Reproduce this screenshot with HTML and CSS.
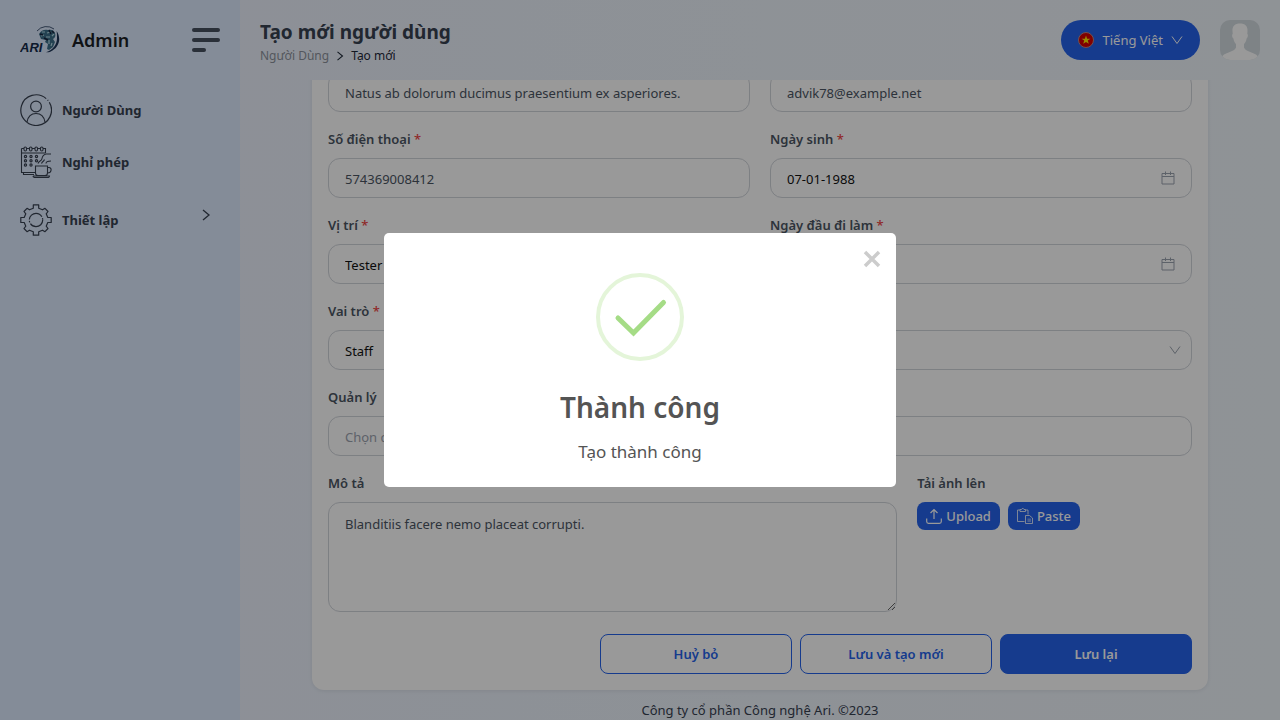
FILE: index.html
```html
<!DOCTYPE html>
<html lang="vi">
<head>
<meta charset="utf-8">
<meta name="viewport" content="width=device-width, initial-scale=1">
<title>Tạo mới người dùng</title>
<link rel="stylesheet" href="styles.css">
</head>
<body>
<svg class="sprite" aria-hidden="true">
  <symbol id="calendar" viewBox="0 0 14 14"><path d="M1 2.500h12v10.500H1zM1 5.500h12M4.500 .5v3.500M9.500 .5v3.500" fill="none" stroke="currentColor"/></symbol>
  <symbol id="down" viewBox="0 0 12 12"><path d="M1 2.500 6 9.500 11 2.500" fill="none" stroke="currentColor"/></symbol>
  <symbol id="right" viewBox="0 0 12 12"><path d="M3 1 9 6 3 11" fill="none" stroke="currentColor" stroke-width="1.300"/></symbol>
</svg>
<div class="app">
  <aside class="sidebar">
    <div class="brand">
      <svg class="logo" viewBox="0 0 40 28" aria-hidden="true">
        <path d="M17 5A12.500 12.500 0 0 1 34 3" fill="none" stroke="#1d3557" stroke-width=".8"/>
        <path d="M36.500 5c4.500 6 3.500 15-4 19.500-2 1.500-4 2-6.500 1.800 7-2.300 11-8 11-14C37 9 37 7 36.500 5z" fill="#1d3557"/>
        <path d="M19 8c2-4 6-5 9-4 3-1 6 0 7 3 1 3 0 5-2 6l2 3-2 5-4 3-2-1 1-5-3-2 1-2-5-1z" fill="#3d6f89"/>
        <path d="M22 6h3M27 7l4-1M21 10l3-1M26 11h4M32 10l2-2M29 14v4M32 17l-1 3" stroke="#b5dce6" stroke-width="1.200"/>
        <path d="M29 4l2 4M24 12l4 2M32 5l2 2M20 8l3 1" stroke="#17263f" stroke-width="1.500"/>
        <text x="0" y="26" class="logo-text">ARI</text>
      </svg>
      <span class="brand-name">Admin</span>
      <button class="menu-toggle" aria-label="Menu"><span></span><span></span><span></span></button>
    </div>
    <nav class="nav">
      <a class="nav-item" href="#">
        <svg class="nav-icon" viewBox="0 0 32 32" aria-hidden="true"><g fill="none" stroke="currentColor" stroke-width="1.200"><path d="M29.300 8.300A15.300 15.300 0 1 1 26.200 4.600M27.600 6l.6.700"/><circle cx="16" cy="12.500" r="5.400"/><path d="M7 28c1-5.500 4.500-8.500 9-8.500s8 3 9 8.500"/></g></svg>
        <span>Người Dùng</span>
      </a>
      <a class="nav-item" href="#">
        <svg class="nav-icon" viewBox="0 0 32 32" aria-hidden="true"><g fill="none" stroke="currentColor" stroke-width="1.100"><path d="M1.500 2.500v24H15M3.500 26.500v2H14M1.500 2.500H4M6.500 2.500h3M12 2.500h3M17.500 2.500h3M23 2.500h2.500V7M1.500 7h24"/><rect x="4" y="1" width="2.500" height="4" rx="1.200"/><rect x="9.500" y="1" width="2.500" height="4" rx="1.200"/><rect x="15" y="1" width="2.500" height="4" rx="1.200"/><rect x="20.500" y="1" width="2.500" height="4" rx="1.200"/><path d="M15.500 20h12v7c0 1.500-1 2.500-2.500 2.500h-7c-1.500 0-2.500-1-2.500-2.500zM27.500 21.500H29c3 0 3 5.500-1.500 5.500M13 30h16.500c0 1-.6 1.500-1.500 1.500H15c-1 0-2-.5-2-1.500M18 17.500c1-3 3.500-2 4-5s2-4 4-4.500h5M21.500 17.500c1-2.500 2-1.500 3-4M26 17.500c0-1.500 2-2.500 5-2.500"/></g><g fill="none" stroke="currentColor" stroke-width="1.200"><circle cx="5.500" cy="10.500" r="1.100"/><circle cx="11" cy="10.500" r="1.100"/><circle cx="16.500" cy="10.500" r="1.100"/><circle cx="5.500" cy="14.700" r="1.100"/><circle cx="11" cy="14.700" r="1.100"/><circle cx="16.500" cy="14.700" r="1.100"/><circle cx="5.500" cy="19" r="1.100"/><circle cx="11" cy="19" r="1.100"/></g></svg>
        <span>Nghỉ phép</span>
      </a>
      <a class="nav-item nav-group" href="#">
        <svg class="nav-icon" viewBox="0 0 32 32" aria-hidden="true"><g fill="none" stroke="currentColor" stroke-width="1.200" stroke-linejoin="round"><path d="M13.300.8h5.400v3.400l3.800 1.600L25 4.300l3 3.200-1.800 2.300 1.600 3.700h3.400v5h-3.400l-1.600 3.700 1.800 2.300-3 3.200-2.500-1.500-3.800 1.600v3.400h-5.400v-3.400l-3.800-1.600L7 27.700l-3-3.200 1.800-2.300-1.600-3.700H.8v-5h3.400l1.600-3.700L4 7.500l3-3.200 2.500 1.500 3.800-1.600z"/><circle cx="16" cy="16" r="6.700" stroke-dasharray="17 1.500 1.500 1.500"/></g></svg>
        <span>Thiết lập</span>
        <svg class="chevron nav-chevron" aria-hidden="true"><use href="#right"/></svg>
      </a>
    </nav>
  </aside>

  <div class="page">
    <header class="topbar">
      <div class="heading">
        <h1>Tạo mới người dùng</h1>
        <nav class="crumbs"><a href="#">Người Dùng</a><svg class="crumb-arrow" aria-hidden="true"><use href="#right"/></svg><span>Tạo mới</span></nav>
      </div>
      <button class="language">
        <svg class="flag" viewBox="0 0 16 16" aria-hidden="true"><circle cx="8" cy="8" r="7.500" fill="#d80000" stroke="#b88"/><path d="M8 3.500 9.100 6.700h3.300L9.800 8.600l1 3.200L8 9.900l-2.800 1.900 1-3.200-2.600-1.900h3.300z" fill="#ffe600"/></svg>
        <span>Tiếng Việt</span>
        <svg class="chevron" aria-hidden="true"><use href="#down"/></svg>
      </button>
      <svg class="avatar" viewBox="0 0 40 40" role="img" aria-label="Avatar"><path fill="#d2dadf" d="M0 0h40v40H0z"/><path fill="#fff" d="M20 3.500c5 0 8 2.500 7.500 8l-.2 2.500c1 .2.700 3.500-.7 4.500-.4 3-1.600 4.500-2.600 5.500v3.500c1.500 4 8 4.500 12 7 2 1.500 3 3 3.500 5.500h-39c.5-2.500 1.500-4 3.500-5.500 4-2.500 10.500-3 12-7V24c-1-1-2.200-2.500-2.600-5.500-1.400-1-1.700-4.300-.7-4.500l-.2-2.500c-.5-5.500 2.500-8 7.500-8z"/></svg>
    </header>

    <main class="content">
      <form class="card">
        <div class="fields">
          <div class="field half"><input class="control" aria-label="Họ tên" value="Natus ab dolorum ducimus praesentium ex asperiores."></div>
          <div class="field half"><input class="control" aria-label="Email" type="email" value="advik78@example.net"></div>

          <div class="field half"><label for="phone">Số điện thoại <b>*</b></label><input class="control" id="phone" value="574369008412"></div>
          <div class="field half"><label for="birth">Ngày sinh <b>*</b></label>
            <div class="with-icon"><input class="control dark" id="birth" value="07-01-1988"><svg class="field-icon" aria-hidden="true"><use href="#calendar"/></svg></div></div>

          <div class="field half"><label for="position">Vị trí <b>*</b></label><select class="control dark" id="position"><option>Tester</option></select></div>
          <div class="field half"><label for="start">Ngày đầu đi làm <b>*</b></label>
            <div class="with-icon"><input class="control dark" id="start"><svg class="field-icon" aria-hidden="true"><use href="#calendar"/></svg></div></div>

          <div class="field full"><label for="role">Vai trò <b>*</b></label>
            <div class="with-icon"><select class="control dark" id="role"><option>Staff</option></select><svg class="field-icon select-icon" aria-hidden="true"><use href="#down"/></svg></div></div>

          <div class="field full"><label for="manager">Quản lý</label><input class="control" id="manager" placeholder="Chọn quản lý"></div>

          <div class="field wide"><label for="note">Mô tả</label><textarea class="control" id="note">Blanditiis facere nemo placeat corrupti.</textarea></div>
          <div class="field narrow"><span class="label">Tải ảnh lên</span>
            <div class="uploads">
              <button type="button" class="mini"><svg viewBox="0 0 16 16" aria-hidden="true"><path d="M8 11V1.500M4.500 5 8 1.500 11.500 5M.7 10.500v3c0 1 .7 1.800 1.800 1.800h11c1 0 1.800-.8 1.800-1.800v-3" fill="none" stroke="currentColor" stroke-width="1.200"/></svg>Upload</button>
              <button type="button" class="mini"><svg viewBox="0 0 16 16" aria-hidden="true"><path d="M7.500 13.500H.5V2h2.500M8.500 2h2.500v4.500M3 3.500V1.500h1.500C5 0 6.500 0 7 1.500h1.500v2zM8.500 7.500h4l3 2.500v5.500h-7z" fill="none" stroke="currentColor" stroke-width=".8"/><path d="M10.500 10.500h3.500v3.500h-3.500z" fill="currentColor" opacity=".4"/></svg>Paste</button>
            </div></div>
        </div>
        <div class="actions">
          <button type="button" class="action">Huỷ bỏ</button>
          <button type="button" class="action">Lưu và tạo mới</button>
          <button type="submit" class="action primary">Lưu lại</button>
        </div>
      </form>
      <footer class="footer">Công ty cổ phần Công nghệ Ari. ©2023</footer>
    </main>
  </div>
</div>

<div class="overlay">
  <div class="modal" role="dialog" aria-modal="true" aria-labelledby="modal-title">
    <button class="close" aria-label="Close"><svg viewBox="0 0 18 18" aria-hidden="true"><path d="m2 2 14 14M16 2 2 16" stroke="currentColor" stroke-width="3.500"/></svg></button>
    <svg class="success" viewBox="0 0 88 88" aria-hidden="true"><circle cx="44" cy="44" r="42" fill="none" stroke="#e4f5d9" stroke-width="4"/><path d="M22 45 37.500 60 67.500 29.500" fill="none" stroke="#a5dc86" stroke-width="5" stroke-linecap="round"/></svg>
    <h2 id="modal-title">Thành công</h2>
    <p>Tạo thành công</p>
  </div>
</div>
</body>
</html>
```
FILE: styles.css
```css
* { box-sizing: border-box; }
body {
  margin: 0;
  font: 13px/22px "Noto Sans", "Open Sans", sans-serif;
  color: #1f2937;
}
h1, h2, p { margin: 0; }
a { color: inherit; text-decoration: none; }
button, input, select, textarea { font: inherit; color: inherit; }
button { padding: 0; border: 0; background: none; cursor: pointer; }
.sprite { display: none; }

.app {
  display: grid;
  grid-template-columns: 240px minmax(0, 1fr);
  height: 100vh;
  background: linear-gradient(90deg, #eaf0fc, #eff5fb);
}
.sidebar { background: #dde9fd; }
.brand {
  display: flex;
  align-items: center;
  gap: 12px;
  height: 80px;
  padding: 0 20px;
}
.logo { width: 40px; height: 28px; }
.logo-text { font: italic bold 13px "Liberation Sans", sans-serif; fill: #152b4a; }
.brand-name { font-size: 18px; font-weight: 600; color: #1b1f26; }
.menu-toggle {
  display: grid;
  gap: 6px;
  width: 28px;
  margin-left: auto;
}
.menu-toggle span { height: 4px; border-radius: 2px; background: #46505f; }
.menu-toggle span:last-child { width: 14px; }

.nav { display: grid; gap: 8px; padding: 8px 20px; }
.nav-item {
  display: flex;
  align-items: center;
  gap: 10px;
  height: 44px;
  font-weight: 700;
  color: #374151;
}
.nav-group { height: 56px; }
.nav-icon { width: 32px; height: 32px; }
.chevron { width: 12px; height: 12px; }
.nav-chevron { margin: 0 8px 10px auto; }

.page { display: flex; flex-direction: column; min-height: 0; }
.topbar {
  display: flex;
  align-items: center;
  gap: 20px;
  height: 80px;
  padding: 0 20px;
}
.heading { margin-right: auto; padding-top: 4px; }
h1 { font-size: 19px; line-height: 28px; font-weight: 700; color: #374151; }
.crumbs {
  display: flex;
  align-items: center;
  gap: 6px;
  font-size: 12px;
  line-height: 20px;
}
.crumbs a { color: #8c919b; }
.crumb-arrow { width: 10px; height: 10px; }
.language {
  display: flex;
  align-items: center;
  gap: 8px;
  height: 40px;
  padding: 0 17px;
  border-radius: 20px;
  background: #2563eb;
  color: #fff;
}
.flag { width: 16px; height: 16px; }
.avatar { width: 40px; height: 40px; border-radius: 10px; }

.content {
  flex: 1;
  display: flex;
  flex-direction: column;
  justify-content: flex-end;
  min-height: 0;
  padding: 0 72px;
  overflow: hidden;
}
.card {
  padding: 16px;
  border-radius: 12px;
  background: #fff;
  box-shadow: 0 1px 4px #00000014;
}
.fields {
  display: grid;
  grid-template-columns: repeat(12, minmax(0, 1fr));
  gap: 16px 20px;
}
.half { grid-column: span 6; }
.full { grid-column: span 12; }
.wide { grid-column: span 8; }
.narrow { grid-column: span 4; }
label, .label {
  display: block;
  margin-bottom: 8px;
  font-weight: 600;
  color: #4b5563;
}
label b { font-weight: 500; color: #ef4444; }
.control {
  display: block;
  width: 100%;
  height: 40px;
  padding: 1px 16px 0;
  border: 1px solid #d1d5db;
  border-radius: 12px;
  background: #fff;
  color: #4b5563;
  outline: 0;
  appearance: none;
}
.dark { color: #111; }
.control::placeholder { color: #9ca3af; opacity: 1; }
textarea.control { height: 110px; padding-top: 10px; resize: vertical; }
.with-icon { display: grid; align-items: center; }
.with-icon > * { grid-area: 1 / 1; }
.field-icon {
  justify-self: end;
  width: 14px;
  height: 14px;
  margin-right: 17px;
  color: #9ca3af;
}
.select-icon { width: 12px; height: 12px; margin-right: 11px; }
.uploads { display: flex; gap: 8px; }
.mini {
  display: flex;
  align-items: center;
  gap: 4px;
  height: 28px;
  padding: 0 9px;
  border-radius: 8px;
  background: #2563eb;
  color: #fff;
  font-weight: 500;
}
.mini svg { width: 16px; height: 16px; }
.actions {
  display: flex;
  justify-content: flex-end;
  gap: 8px;
  margin-top: 22px;
}
.action {
  width: 192px;
  height: 40px;
  border: 1px solid #2563eb;
  border-radius: 8px;
  color: #2563eb;
  font-weight: 600;
}
.primary { background: #2563eb; color: #fff; }
.footer { padding-top: 10px; line-height: 20px; text-align: center; color: #374151; }

.overlay {
  position: fixed;
  inset: 0;
  display: grid;
  place-items: center;
  background: rgba(0, 0, 0, .4);
}
.modal {
  position: relative;
  display: flex;
  flex-direction: column;
  align-items: center;
  width: 512px;
  max-width: 100%;
  padding: 40px 20px 20px;
  border-radius: 5px;
  background: #fff;
  color: #545454;
}
.close {
  position: absolute;
  top: 17px;
  right: 15px;
  width: 18px;
  height: 18px;
  color: #ccc;
}
.close svg { display: block; }
.success { width: 88px; height: 88px; }
h2 { margin-top: 24px; font-size: 28px; line-height: 44px; font-weight: 600; }
.modal p { margin-top: 8px; font-size: 17px; line-height: 30px; }
```
